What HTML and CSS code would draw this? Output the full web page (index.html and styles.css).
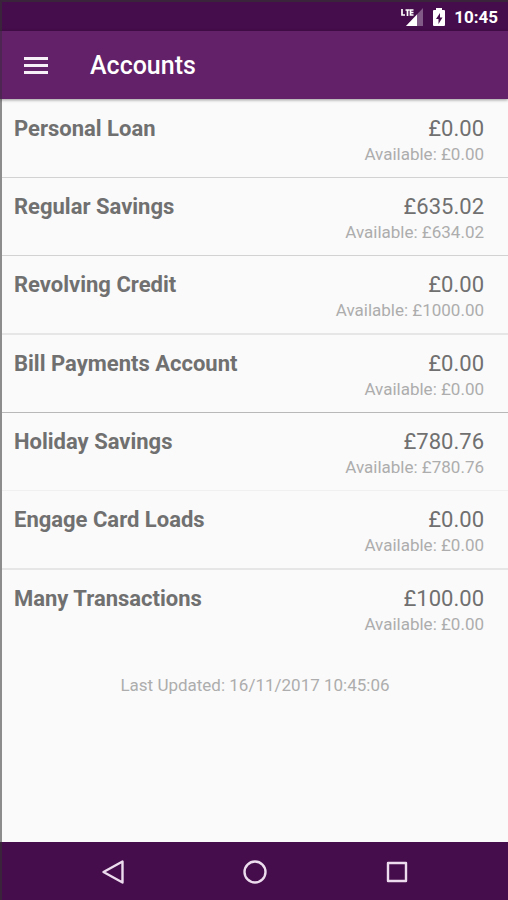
FILE: index.html
```html
<!DOCTYPE html>
<html lang="en">
<head>
<meta charset="utf-8">
<meta name="viewport" content="width=device-width, initial-scale=1">
<title>Accounts</title>
<link rel="stylesheet" href="styles.css">
</head>
<body>
<div class="screen">
  <div class="status-bar">
    <svg class="signal" viewBox="0 0 24 20" aria-hidden="true">
      <path d="M23 1v18H6z" fill="#825a88"/>
      <path d="M17 7.500v11.500H6z" fill="#fff"/>
      <path d="M2 2v6h3M5.500 3h4M7.500 3v6M13.500 3h-3v5h3M10.500 5.500h3" fill="none" stroke="#fff" stroke-width="1.700"/>
    </svg>
    <svg class="battery" viewBox="0 0 14 20" aria-hidden="true">
      <path d="M4 1h6v2h2q1 0 1 1v14q0 1-1 1H2q-1 0-1-1V4q0-1 1-1h2z" fill="#fff"/>
      <path d="M8 6l-4 6h2.500v5l4-6.500H8z" fill="#450d4b"/>
    </svg>
    <span class="clock">10:45</span>
  </div>
  <header class="app-bar">
    <button class="menu-button" type="button" aria-label="Open menu">
      <svg class="menu-icon" viewBox="0 0 24 18" aria-hidden="true"><path d="M0 1.500h24M0 8.500h24M0 15.500h24" stroke="#f8f0f8" stroke-width="2.800"/></svg>
    </button>
    <h1 class="title">Accounts</h1>
  </header>
  <main class="content">
    <ul class="accounts">
      <li class="account"><h2 class="name">Personal Loan</h2><div class="figures"><span class="balance">£0.00</span><span class="available">Available: £0.00</span></div></li>
      <li class="account"><h2 class="name">Regular Savings</h2><div class="figures"><span class="balance">£635.02</span><span class="available">Available: £634.02</span></div></li>
      <li class="account"><h2 class="name">Revolving Credit</h2><div class="figures"><span class="balance">£0.00</span><span class="available">Available: £1000.00</span></div></li>
      <li class="account strong"><h2 class="name">Bill Payments Account</h2><div class="figures"><span class="balance">£0.00</span><span class="available">Available: £0.00</span></div></li>
      <li class="account faint"><h2 class="name">Holiday Savings</h2><div class="figures"><span class="balance">£780.76</span><span class="available">Available: £780.76</span></div></li>
      <li class="account"><h2 class="name">Engage Card Loads</h2><div class="figures"><span class="balance">£0.00</span><span class="available">Available: £0.00</span></div></li>
      <li class="account"><h2 class="name">Many Transactions</h2><div class="figures"><span class="balance">£100.00</span><span class="available">Available: £0.00</span></div></li>
    </ul>
    <p class="updated">Last Updated: 16/11/2017 10:45:06</p>
  </main>
  <nav class="nav-bar" aria-label="System">
    <button class="nav-button" type="button" aria-label="Back"><svg class="nav-icon" viewBox="0 0 24 24" aria-hidden="true"><path d="M21.500 1.500v21L2.500 12z"/></svg></button>
    <button class="nav-button" type="button" aria-label="Home"><svg class="nav-icon" viewBox="0 0 24 24" aria-hidden="true"><circle cx="12" cy="12" r="10.500"/></svg></button>
    <button class="nav-button" type="button" aria-label="Recent apps"><svg class="nav-icon" viewBox="0 0 24 24" aria-hidden="true"><rect x="3" y="3" width="18" height="18"/></svg></button>
  </nav>
</div>
</body>
</html>
```
FILE: styles.css
```css
* {
  box-sizing: border-box;
}

body {
  margin: 0;
  background: #fafafa;
  color: #707070;
  font-family: Roboto, "Liberation Sans", sans-serif;
}

.screen {
  display: flex;
  flex-direction: column;
  min-height: 100vh;
}

.status-bar {
  display: flex;
  align-items: center;
  justify-content: flex-end;
  height: 31px;
  padding-right: 10px;
  border-top: 2px solid #39243c;
  border-left: 2px solid #39243c;
  background: #450d4b;
  color: #fff;
}

.signal {
  width: 24px;
  height: 20px;
  margin-right: 8px;
}

.battery {
  width: 14px;
  height: 20px;
  margin-right: 8px;
}

.clock {
  font-size: 17px;
  font-weight: 700;
  line-height: 24px;
}

.app-bar {
  position: relative;
  display: flex;
  align-items: center;
  height: 68px;
  padding-top: 2px;
  padding-left: 12px;
  border-left: 2px solid #4d2652;
  background: #622168;
  color: #fff;
  box-shadow: 0 1px 3px rgba(0, 0, 0, 0.4);
}

.menu-button {
  display: flex;
  align-items: center;
  justify-content: center;
  width: 44px;
  height: 44px;
  padding: 0;
  border: 0;
  background: none;
}

.menu-icon {
  width: 24px;
  height: 18px;
}

.title {
  margin: 0 0 0 32px;
  font-size: 25px;
  font-weight: 500;
  line-height: 32px;
}

.content {
  flex: 1;
  padding-top: 1px;
  border-left: 2px solid #8c8c8c;
}

.accounts {
  margin: 0;
  padding: 0;
  list-style: none;
}

.account {
  display: flex;
  justify-content: space-between;
  min-height: 78px;
  padding: 15px 24px 10px 12px;
  border-bottom: 1px solid #d2d2d2;
}

.account:nth-child(3n) {
  min-height: 79px;
  border-bottom: 2px solid #e6e6e6;
}

.account.strong {
  border-bottom-color: #b8b8b8;
}

.account.faint {
  border-bottom-color: #f0f0f0;
}

.account:last-child {
  border-bottom: 0;
}

.name {
  margin: 0;
  font-size: 22px;
  font-weight: 700;
  line-height: 28px;
}

.figures {
  display: flex;
  flex-direction: column;
  align-items: flex-end;
}

.balance {
  font-size: 22px;
  line-height: 28px;
}

.available {
  color: #adadad;
  font-size: 17px;
  line-height: 22px;
}

.updated {
  margin: 25px 0;
  color: #adadad;
  font-size: 17px;
  line-height: 24px;
  text-align: center;
}

.nav-bar {
  display: flex;
  justify-content: center;
  gap: 94px;
  height: 58px;
  padding-top: 1px;
  border-left: 2px solid #39243c;
  background: #450d4b;
}

.nav-button {
  display: flex;
  align-items: center;
  justify-content: center;
  width: 48px;
  padding: 0;
  border: 0;
  background: none;
}

.nav-icon {
  width: 24px;
  height: 24px;
  fill: none;
  stroke: #ecdcee;
  stroke-width: 2.400;
  stroke-linejoin: round;
}
```
